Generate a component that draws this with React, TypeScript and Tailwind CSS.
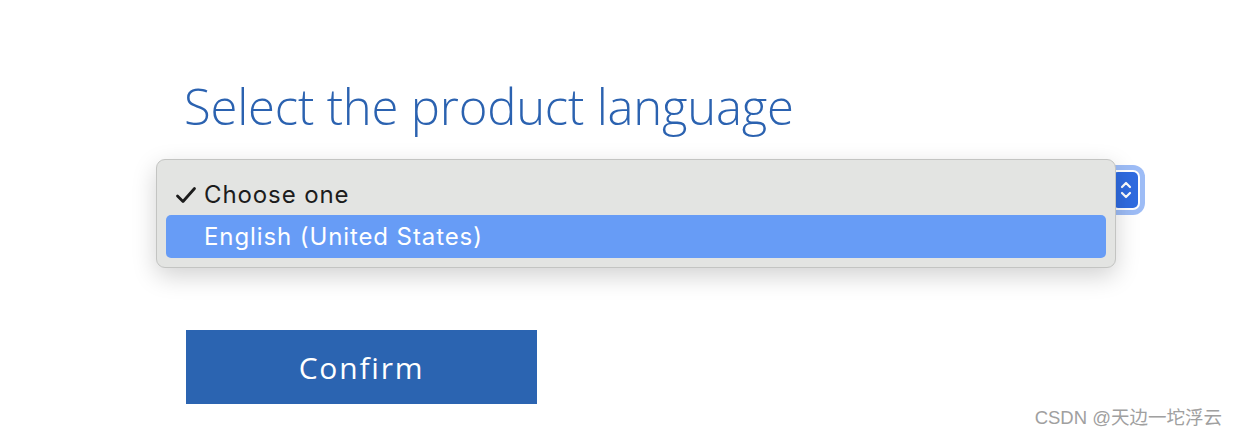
import React from 'react';

const font = { fontFamily: '"Open Sans", "Noto Sans", sans-serif' };

function Stepper() {
  return (
    <div className="w-[25px] h-[36px] rounded-[5px] bg-[#2f6be0] flex items-center justify-center">
      <svg width="14" height="24" viewBox="0 0 14 24" fill="none" stroke="white" strokeWidth="2.2" strokeLinecap="round" strokeLinejoin="round">
        <path d="M3 9 L7 5 L11 9" />
        <path d="M3 15 L7 19 L11 15" />
      </svg>
    </div>
  );
}

function LanguageSelect() {
  return (
    <div className="relative w-[960px] h-[52px]">
      {/* closed select control with focus ring */}
      <div className="absolute left-0 top-[11px] w-[956px] h-[40px] rounded-[7px] bg-white ring-[5px] ring-[#5b8ff0]/60 flex items-center justify-end pr-[2px]">
        <Stepper />
      </div>

      {/* open popup menu */}
      <div
        className="absolute left-[-28px] top-0 w-[960px] h-[109px] rounded-[9px] bg-[#e3e4e2] border border-[#c3c4c2] shadow-[0_8px_24px_rgba(0,0,0,0.18)] px-[9px] pt-[14px]"
        style={{ fontFamily: 'Inter, "Noto Sans", sans-serif' }}
      >
        <div className="flex items-center h-[41px] text-[24px] tracking-[0.9px] text-[#1c1c1c]">
          <span className="w-[38px] pl-[9px] flex items-center">
            <svg width="22" height="18" viewBox="0 0 22 18" fill="none" stroke="#1c1c1c" strokeWidth="2.8" strokeLinecap="round" strokeLinejoin="round">
              <path d="M2.5 10 L8 15.5 L19.5 2.5" />
            </svg>
          </span>
          <span>Choose one</span>
        </div>
        <div className="flex items-center h-[43px] rounded-[5px] bg-[#679cf6] text-[24px] tracking-[0.9px] text-white pl-[38px]">
          English (United States)
        </div>
      </div>
    </div>
  );
}

export default function App() {
  return (
    <div className="relative w-[1238px] h-[440px] bg-white overflow-hidden">
      <div className="flex flex-col pl-[184px] pt-[74px]">
        <h1 className="text-[49px] font-light text-[#2b62b0] leading-[64px] tracking-[-0.2px]" style={font}>
          Select the product language
        </h1>
        <div className="mt-[21px]">
          <LanguageSelect />
        </div>
        <button
          className="mt-[119px] ml-[2px] w-[351px] h-[74px] bg-[#2b64b1] text-white text-[30px] tracking-[1.8px] flex items-center justify-center"
          style={font}
        >
          Confirm
        </button>
      </div>
      <div
        className="absolute right-[16px] bottom-[8px] text-[18.5px] text-[#a0a0a0]"
        style={{ fontFamily: '"Liberation Sans", "Noto Sans CJK SC", sans-serif' }}
      >
        CSDN @天边一坨浮云
      </div>
    </div>
  );
}
